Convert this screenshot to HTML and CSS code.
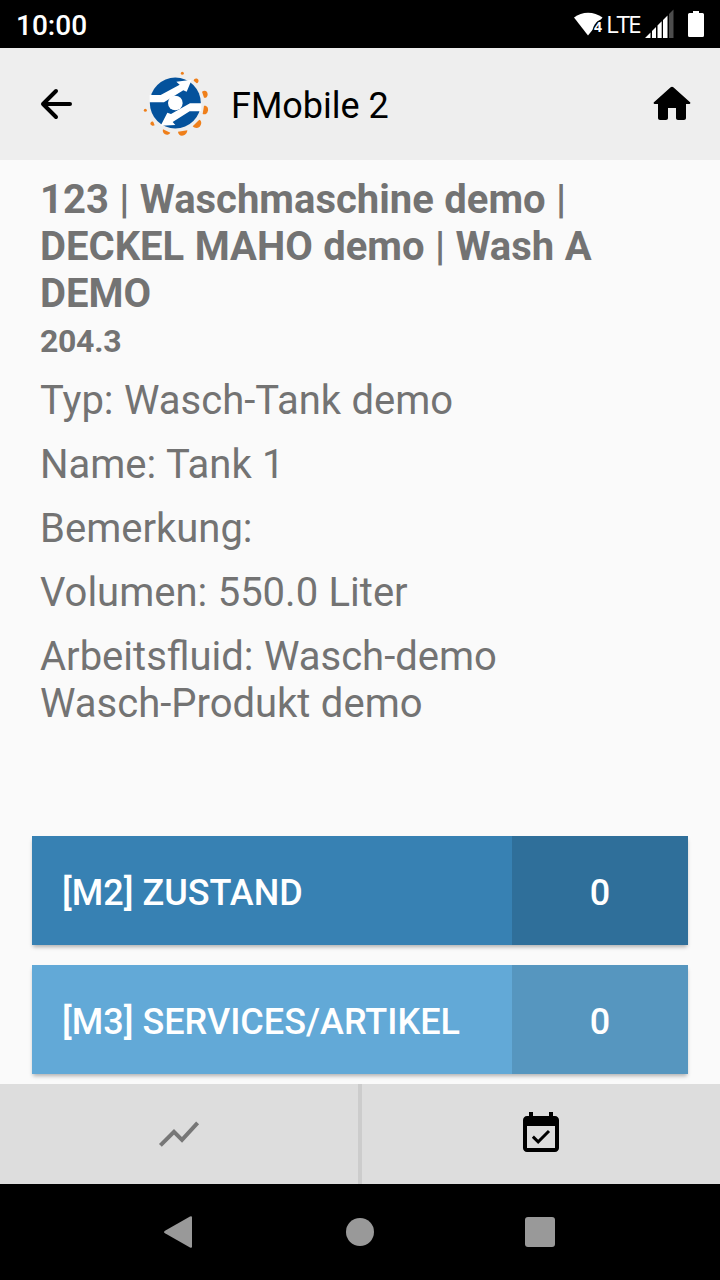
FILE: index.html
```html
<!DOCTYPE html>
<html lang="de">
<head>
    <meta charset="UTF-8">
    <meta name="viewport" content="width=device-width, initial-scale=1.0">
    <title>FMobile 2</title>
    <link rel="stylesheet" href="styles.css">
</head>
<body>
    <div class="status-bar">
        <span class="clock">10:00</span>
        <div class="status-icons">
            <svg class="wifi" width="30" height="24" viewBox="0 0 30 24">
                <path d="M0 5.5C8 -1 20 -1 28.500 5.500L14 23.500Z" fill="#fff"/>
                <path d="M30 7C24 7 19.500 12 18.500 19L18 24H30Z" fill="#000"/>
                <text x="20" y="20" class="wifi-label">4</text>
            </svg>
            <span class="lte">LTE</span>
            <svg class="signal" width="30" height="30" viewBox="0 0 30 30">
                <path d="M0 29L5.500 23.500V29ZM7 29V22L11 18V29ZM12.500 29V16.500L16.700 12.300V29ZM18 29V11L22.500 6.500V29Z" fill="#fff"/>
                <path d="M24 29V5L28.500 0.500V29Z" fill="#4d4d4d"/>
            </svg>
            <svg class="battery" width="16" height="26" viewBox="0 0 16 26">
                <path d="M5 0h6v2h3.500q1.500 0 1.500 1.500v21q0 1.500-1.500 1.500h-13q-1.500 0-1.500-1.500v-21q0-1.500 1.500-1.500H5z" fill="#fff"/>
            </svg>
        </div>
    </div>

    <div class="header">
        <svg class="back" width="32" height="32" viewBox="0 0 32 32">
            <path d="M30 16H3M16 3L3 16L16 29" fill="none" stroke="#000" stroke-width="4" stroke-linecap="round" stroke-linejoin="round"/>
        </svg>
        <svg class="logo" width="84" height="84" viewBox="0 -6 252 252">
            <g fill="#ef7f1a">
                <circle cx="139" cy="28" r="4.500"/>
                <circle cx="28" cy="139" r="4.500"/>
                <path d="M173 50C174 42 183 41 187 47C189 52 186 57 182 58Z"/>
                <path d="M198 83C208 77 215 83 215 92C214 99 210 103 204 101Z"/>
                <path d="M204 125C214 124 217 132 216 140C214 149 207 153 200 150Z"/>
                <path d="M190 167C198 171 197 181 191 188C184 194 176 193 170 187Z"/>
                <path d="M154 199C154 208 146 215 138 215C131 215 126 209 126 203Z"/>
                <path d="M103 206C99 212 93 214 87 211C81 207 79 202 81 196Z"/>
                <path d="M56 184C51 187 46 185 43 180C43 174 48 171 52 174Z"/>
            </g>
            <circle cx="118" cy="117" r="76.500" fill="#04529c"/>
            <g fill="#fff">
                <path d="M41 93H74L131 62L121 53L167 47L152 83L142 79L84 115H41Z"/>
                <path d="M196 118H162L105 150L94 146L74 185L118 183L110 174L161 142H196Z"/>
                <circle cx="118" cy="117" r="22"/>
            </g>
        </svg>
        <h1>FMobile 2</h1>
        <svg class="home" width="48" height="48" viewBox="0 0 24 24">
            <path d="M10 19v-5h4v5c0 .55.45 1 1 1h3c.55 0 1-.45 1-1v-7h1.700c.46 0 .68-.57.33-.87L12.670 3.600c-.38-.34-.96-.34-1.340 0l-8.360 7.530c-.34.3-.13.87.33.87H5v7c0 .55.45 1 1 1h3c.55 0 1-.45 1-1z"/>
        </svg>
    </div>

    <div class="content">
        <h2>123 | Waschmaschine demo | DECKEL MAHO demo | Wash A DEMO</h2>
        <h3>204.3</h3>
        <p>Typ: Wasch-Tank demo</p>
        <p>Name: Tank 1</p>
        <p>Bemerkung:</p>
        <p>Volumen: 550.0 Liter</p>
        <p>Arbeitsfluid: Wasch-demo<br>Wasch-Produkt demo</p>

        <div class="buttons">
            <div class="row dark">
                <span class="label">[M2] ZUSTAND</span>
                <span class="count">0</span>
            </div>
            <div class="row light">
                <span class="label">[M3] SERVICES/ARTIKEL</span>
                <span class="count">0</span>
            </div>
        </div>
    </div>

    <div class="tabs">
        <div class="tab">
            <svg width="48" height="48" viewBox="0 0 24 24">
                <path d="M2.700 17.700L9.500 10.900L13.500 14.900L21.300 6.400" fill="none" stroke="#777" stroke-width="2"/>
            </svg>
        </div>
        <div class="tab">
            <svg width="48" height="48" viewBox="0 0 24 24">
                <path d="M16.530 11.060L15.470 10l-4.880 4.880-2.120-2.120-1.060 1.060L10.590 17l5.940-5.940zM19 3h-1V1h-2v2H8V1H6v2H5c-1.110 0-1.990.9-1.990 2L3 19c0 1.100.89 2 2 2h14c1.100 0 2-.9 2-2V5c0-1.100-.9-2-2-2zm0 16H5V8h14v11z"/>
            </svg>
        </div>
    </div>

    <div class="nav-bar">
        <svg width="32" height="32" viewBox="0 0 32 32">
            <path d="M28 1.500V30.500Q28 32.500 26 31.500L1 17.300Q-1 16 1 14.700L26 0.500Q28 -0.500 28 1.500Z" fill="#999"/>
        </svg>
        <svg width="32" height="32" viewBox="0 0 32 32">
            <circle cx="16" cy="16" r="14" fill="#999"/>
        </svg>
        <svg width="32" height="32" viewBox="0 0 32 32">
            <rect x="1" y="1" width="30" height="30" rx="3" fill="#999"/>
        </svg>
    </div>
</body>
</html>
```
FILE: styles.css
```css
* {
    box-sizing: border-box;
}

body {
    margin: 0;
    width: 720px;
    height: 1280px;
    display: flex;
    flex-direction: column;
    overflow: hidden;
    background-color: #fafafa;
    font-family: Roboto, sans-serif;
}

svg {
    display: block;
    flex: none;
}

/* Android status bar */
.status-bar {
    height: 48px;
    flex: none;
    display: flex;
    justify-content: space-between;
    padding: 0 16px;
    background-color: #000;
    color: #fff;
}

.clock {
    font-size: 28px;
    font-weight: 500;
    line-height: 51px;
}

.status-icons {
    display: flex;
}

.wifi {
    margin-top: 12px;
}

.wifi-label {
    font-size: 14px;
    font-weight: 700;
    font-family: "Open Sans", sans-serif;
    fill: #fff;
    stroke: #000;
    stroke-width: 2px;
    paint-order: stroke;
}

.lte {
    width: 41px;
    padding-left: 2px;
    font-family: "Open Sans", sans-serif;
    font-size: 24.5px;
    line-height: 47px;
    letter-spacing: -2.2px;
}

.signal {
    margin-top: 9px;
}

.battery {
    margin: 11px 0 0 13px;
}

.header {
    height: 112px;
    flex: none;
    display: flex;
    align-items: center;
    padding: 0 24px 0 40px;
    background-color: #eee;
}

.logo {
    margin-left: 64px;
}

.header h1 {
    flex: 1;
    margin: 3px 0 0 11px;
    font-size: 36px;
    font-weight: 400;
}

.content {
    flex: 1;
    min-height: 0;
    padding: 16px 32px 0;
    color: #737373;
}

.content h2,
.content h3,
.content p {
    margin: 0 8px;
    font-size: 40px;
    line-height: 47px;
}

.content h2 {
    word-spacing: 0.5px;
}

.content h3 {
    margin-top: 5px;
    margin-bottom: 17px;
    font-size: 32px;
    line-height: 38px;
    letter-spacing: -0.3px;
}

.content p {
    margin-bottom: 17px;
    word-spacing: 0.5px;
}

/* measurement buttons */
.buttons {
    display: flex;
    flex-direction: column;
    gap: 20px;
    margin-top: 109px;
}

.row {
    display: flex;
    height: 109px;
    color: #fff;
    font-size: 36px;
    font-weight: 500;
    line-height: 115px;
    box-shadow: 0 3px 4px -1px rgba(0, 0, 0, 0.3);
}

.label {
    width: 480px;
    padding-left: 30px;
}

.count {
    flex: 1;
    text-align: center;
}

.dark {
    background-color: #3781b3;
}

.dark .count {
    background-color: #2f6f9a;
}

.light {
    background-color: #62a9d7;
}

.light .count {
    background-color: #5696bf;
}

.label,
.count {
    height: 109px;
}

.tabs {
    position: relative;
    height: 100px;
    flex: none;
    display: flex;
    background-color: #ddd;
}

.tab {
    flex: 1;
    display: flex;
    align-items: center;
    justify-content: center;
}

.tab:first-child {
    border-right: 4px solid #ccc;
    flex: 0 0 362px;
}

/* Android navigation bar */
.nav-bar {
    height: 96px;
    flex: none;
    display: flex;
    align-items: center;
    justify-content: space-between;
    padding: 0 164px;
    background-color: #000;
}
```
